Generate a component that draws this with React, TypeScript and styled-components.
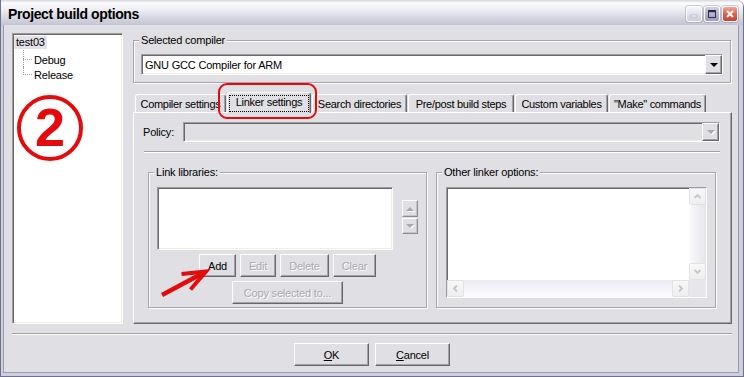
import React from "react";
import styled, { createGlobalStyle, css } from "styled-components";

const FACE = "#e0dfe3";
const RED = "#e30b0b";

const GlobalStyle = createGlobalStyle`
  html, body {
    margin: 0;
    padding: 0;
    background: #ffffff;
  }
  #root {
    width: 744px;
    height: 377px;
  }
`;

// classic 3D edges
const sunken = css`
  border: 1px solid;
  border-color: #9d9da1 #ffffff #ffffff #9d9da1;
  box-shadow: inset 1px 1px 0 #696969, inset -1px -1px 0 #f1efe2;
`;

const raised = css`
  border: 1px solid;
  border-color: #ffffff #68686c #68686c #ffffff;
  box-shadow: inset -1px -1px 0 #a2a2a7;
`;

const Window = styled.div`
  width: 744px;
  height: 377px;
  display: flex;
  flex-direction: column;
  box-sizing: border-box;
  border: 1px solid #70708c;
  border-top: none;
  border-top-right-radius: 7px;
  overflow: hidden;
  background: ${FACE};
  font-family: "Liberation Sans", Arial, sans-serif;
  font-size: 11px;
  letter-spacing: -0.2px;
  color: #000;

  * {
    box-sizing: border-box;
  }
`;

const TitleBar = styled.div`
  height: 25px;
  flex: none;
  display: flex;
  align-items: center;
  padding: 3px 5px 0 7px;
  background: linear-gradient(
    #d6d6e2 0px,
    #fcfcfe 3px,
    #efeff4 9px,
    #dcdce6 16px,
    #c4c4d3 25px
  );
`;

const TitleText = styled.span`
  flex: 1;
  font-weight: bold;
  font-size: 14px;
  letter-spacing: -0.4px;
`;

const CaptionButtons = styled.div`
  display: flex;
  gap: 2px;
`;

const CapButton = styled.div<{ $kind: "min" | "max" | "close" }>`
  width: 16px;
  height: 16px;
  border: 1px solid #ffffff;
  border-radius: 3px;
  display: flex;
  align-items: center;
  justify-content: center;
  box-shadow: 0 0 0 1px rgba(120, 120, 150, 0.35);
  background: ${(p) =>
    p.$kind === "close"
      ? "linear-gradient(#f2a595, #dc5d4a 55%, #c8402f)"
      : p.$kind === "max"
      ? "linear-gradient(#d0d0e0, #9c9cbc)"
      : "linear-gradient(#f6f6f9, #cdcdda)"};
`;

const Frame = styled.div`
  flex: 1;
  display: flex;
  flex-direction: column;
  min-height: 0;
  border-style: solid;
  border-color: #cfcfdc;
  border-width: 0 4px 3px 2px;
  box-shadow: inset 1px 0 0 #9b9bb3, inset -1px 0 0 #9b9bb3,
    inset 0 -1px 0 #9b9bb3;
  padding: 8px 7px 7px 9px;
`;

const Main = styled.div`
  flex: 1;
  display: flex;
  gap: 10px;
  min-height: 0;
`;

const Tree = styled.div`
  width: 111px;
  position: relative;
  background: #ffffff;
  ${sunken};
  padding: 1px;
`;

const TreeRoot = styled.div`
  height: 17px;
  display: flex;
  align-items: flex-start;
  padding-top: 1px;
`;

const RootLabel = styled.span`
  background: #e3e2e8;
  padding: 0 2px 1px 2px;
`;

const TreeChild = styled.div<{ $last?: boolean }>`
  height: 15px;
  display: flex;
  align-items: center;
  padding-left: 20px;
  position: relative;

  &::before {
    content: "";
    position: absolute;
    left: 9px;
    top: 7px;
    width: 9px;
    border-top: 1px dotted #a0a0a0;
  }

  &::after {
    content: "";
    position: absolute;
    left: 9px;
    top: ${(p) => (p.$last ? 0 : -2)}px;
    height: ${(p) => (p.$last ? 8 : 17)}px;
    border-left: 1px dotted #a0a0a0;
  }
`;

const CircledNumber = styled.div`
  position: absolute;
  left: 4px;
  top: 61px;
  width: 66px;
  height: 66px;
  border: 4px solid ${RED};
  border-radius: 50%;
  display: flex;
  align-items: center;
  justify-content: center;
  padding-bottom: 3px;
  color: ${RED};
  font-family: "Liberation Sans", Arial, sans-serif;
  font-weight: bold;
  font-size: 54px;
  line-height: 1;
  letter-spacing: 0;
`;

const RightCol = styled.div`
  flex: 1;
  min-width: 0;
  display: flex;
  flex-direction: column;
  position: relative;
`;

const GroupBox = styled.fieldset<{ $pad: string }>`
  margin: 0;
  min-width: 0;
  padding: ${(p) => p.$pad};
  border: 1px solid #a5a4aa;
  box-shadow: inset 1px 1px 0 #ffffff, 1px 1px 0 #ffffff;
`;

// legend sits in the fieldset's content box, so its offset is given against the padding
const Legend = styled.legend<{ $ml: number }>`
  font: inherit;
  line-height: 13px;
  padding: 0 2px;
  margin-left: ${(p) => p.$ml}px;
  background: ${FACE};
`;

const Combo = styled.div<{ $h: number; $disabled?: boolean }>`
  height: ${(p) => p.$h}px;
  display: flex;
  background: ${(p) => (p.$disabled ? FACE : "#ffffff")};
  ${sunken};
`;

const ComboText = styled.div`
  flex: 1;
  display: flex;
  align-items: center;
  padding-left: 3px;
`;

const DropButton = styled.div`
  width: 17px;
  display: flex;
  align-items: center;
  justify-content: center;
  background: ${FACE};
  ${raised};
`;

const Triangle = styled.span<{ $up?: boolean; $disabled?: boolean }>`
  width: 0;
  height: 0;
  border-left: 4px solid transparent;
  border-right: 4px solid transparent;
  ${(p) =>
    p.$up
      ? `border-bottom: 4px solid ${p.$disabled ? "#a9a8ad" : "#000"};`
      : `border-top: 4px solid ${p.$disabled ? "#a9a8ad" : "#000"};`}
  ${(p) => p.$disabled && "filter: drop-shadow(1px 1px 0 #ffffff);"}
`;

const TabStrip = styled.div`
  height: 20px;
  margin-top: 9px;
  padding-left: 2px;
  display: flex;
  align-items: flex-end;
  gap: 1px;
  position: relative;
  z-index: 1;
`;

const Tab = styled.div<{ $w: number; $active?: boolean }>`
  width: ${(p) => p.$w}px;
  height: ${(p) => (p.$active ? 21 : 18)}px;
  margin-bottom: ${(p) => (p.$active ? -1 : 0)}px;
  padding: ${(p) => (p.$active ? "2px 1px 1px 1px" : "3px 0 0 0")};
  display: flex;
  justify-content: center;
  align-items: ${(p) => (p.$active ? "stretch" : "flex-start")};
  line-height: 13px;
  white-space: nowrap;
  letter-spacing: -0.3px;
  background: ${FACE};
  border: 1px solid;
  border-bottom: none;
  border-color: #ffffff #68686c #68686c #ffffff;
  border-radius: 3px 3px 0 0;
  box-shadow: inset -1px 0 0 #a2a2a7;
`;

const FocusBox = styled.div`
  flex: 1;
  border: 1px dotted #000;
  text-align: center;
`;

const TabMark = styled.div`
  position: absolute;
  left: 85px;
  top: 50px;
  width: 99px;
  height: 36px;
  border: 2px solid ${RED};
  border-radius: 9px;
  z-index: 2;
`;

const Panel = styled.div`
  flex: 1;
  display: flex;
  flex-direction: column;
  position: relative;
  background: ${FACE};
  border: 1px solid;
  border-color: #ffffff #68686c #68686c #ffffff;
  box-shadow: inset -1px -1px 0 #a2a2a7;
  padding: 9px 11px 0 9px;
`;

const PolicyRow = styled.div`
  display: flex;
  align-items: center;
`;

const FieldLabel = styled.span`
  width: 40px;
`;

const Etched = styled.div<{ $m: string }>`
  height: 2px;
  margin: ${(p) => p.$m};
  border-top: 1px solid #a0a0a6;
  border-bottom: 1px solid #ffffff;
`;

const GroupsRow = styled.div`
  display: flex;
  gap: 9px;
  margin-top: 13px;
  padding: 0 4px 0 5px;

  & > fieldset {
    flex: 1;
  }
`;

const GroupBody = styled.div`
  display: flex;
  flex-direction: column;
`;

const ListRow = styled.div`
  display: flex;
  align-items: center;
  gap: 9px;
`;

const ListBox = styled.div`
  flex: 1;
  height: 63px;
  background: #ffffff;
  ${sunken};
`;

const Spinner = styled.div`
  width: 16px;
  display: flex;
  flex-direction: column;
  gap: 1px;
  margin-top: -3px;
`;

const SpinButton = styled.div<{ $h: number }>`
  height: ${(p) => p.$h}px;
  display: flex;
  align-items: center;
  justify-content: center;
  background: ${FACE};
  border: 1px solid;
  border-color: #ffffff #8c8c92 #8c8c92 #ffffff;
  box-shadow: inset -1px -1px 0 #c4c4c9;
`;

const ButtonRow = styled.div`
  display: flex;
  justify-content: center;
  gap: 4px;
  margin-top: 4px;
`;

const Button = styled.button<{ $w: number }>`
  width: ${(p) => p.$w}px;
  height: 23px;
  margin: 0;
  padding: 0;
  font: inherit;
  letter-spacing: inherit;
  color: #000;
  background: ${FACE};
  ${raised};

  &:disabled {
    color: #a9a8ad;
    text-shadow: 1px 1px 0 #ffffff;
  }
`;

const TextArea = styled.div`
  height: 111px;
  background: #ffffff;
  ${sunken};
  display: grid;
  grid-template-columns: 1fr 17px;
  grid-template-rows: 1fr 17px;
`;

const VScroll = styled.div`
  display: flex;
  flex-direction: column;
  justify-content: space-between;
  background: linear-gradient(90deg, #fbfbfc, #ececf2 60%, #e6e6ef);
`;

const HScroll = styled.div`
  display: flex;
  justify-content: space-between;
  background: linear-gradient(#ebebf2, #f4f4f8 50%, #fdfdfe);
`;

const ScrollCorner = styled.div`
  background: #e7e6ea;
`;

const ScrollButton = styled.div`
  width: 17px;
  height: 17px;
  display: flex;
  align-items: center;
  justify-content: center;
  background: linear-gradient(#f8f8f8, #eeeeef);
  border: 1px solid #e2e2e6;
  border-radius: 2px;
`;

const ArrowMark = styled.svg`
  position: absolute;
  left: 24px;
  top: 155px;
  z-index: 2;
`;

const BottomRow = styled.div`
  display: flex;
  justify-content: center;
  gap: 6px;
  margin-top: 8px;
`;

const Chevron = ({ dir }: { dir: "up" | "down" | "left" | "right" }) => {
  const pts = {
    up: "1.5,6 4.5,3 7.5,6",
    down: "1.5,3 4.5,6 7.5,3",
    left: "6,1.5 3,4.5 6,7.5",
    right: "3,1.5 6,4.5 3,7.5",
  }[dir];
  return (
    <svg width="9" height="9" viewBox="0 0 9 9">
      <polyline points={pts} fill="none" stroke="#c6c6cc" strokeWidth="1.8" />
    </svg>
  );
};

const TABS = [
  { label: "Compiler settings", w: 91 },
  { label: "Linker settings", w: 84, active: true },
  { label: "Search directories", w: 95 },
  { label: "Pre/post build steps", w: 106 },
  { label: "Custom variables", w: 93 },
  { label: "\"Make\" commands", w: 97 },
];

export default function App() {
  return (
    <>
      <GlobalStyle />
      <Window>
        <TitleBar>
          <TitleText>Project build options</TitleText>
          <CaptionButtons>
            <CapButton $kind="min">
              <svg width="10" height="10" viewBox="0 0 10 10">
                <rect x="2" y="6" width="6" height="2" fill="#f6f6fa" stroke="#9a9ab0" strokeWidth="0.5" />
              </svg>
            </CapButton>
            <CapButton $kind="max">
              <svg width="10" height="10" viewBox="0 0 10 10">
                <rect x="1.5" y="1.5" width="7" height="7" fill="none" stroke="#2a2a4a" strokeWidth="1" />
                <line x1="1.5" y1="2.5" x2="8.5" y2="2.5" stroke="#2a2a4a" strokeWidth="1.5" />
              </svg>
            </CapButton>
            <CapButton $kind="close">
              <svg width="10" height="10" viewBox="0 0 10 10">
                <path d="M2 2 L8 8 M8 2 L2 8" stroke="#ffffff" strokeWidth="2" />
              </svg>
            </CapButton>
          </CaptionButtons>
        </TitleBar>

        <Frame>
          <Main>
            <Tree>
              <TreeRoot>
                <RootLabel>test03</RootLabel>
              </TreeRoot>
              <TreeChild>Debug</TreeChild>
              <TreeChild $last>Release</TreeChild>
              <CircledNumber>2</CircledNumber>
            </Tree>

            <RightCol>
              <GroupBox $pad="7px 7px 7px 7px" style={{ marginTop: 1, marginRight: 1 }}>
                <Legend $ml={-2}>Selected compiler</Legend>
                <Combo $h={21}>
                  <ComboText>GNU GCC Compiler for ARM</ComboText>
                  <DropButton>
                    <Triangle />
                  </DropButton>
                </Combo>
              </GroupBox>

              <TabStrip>
                {TABS.map((t) => (
                  <Tab key={t.label} $w={t.w} $active={t.active}>
                    {t.active ? <FocusBox>{t.label}</FocusBox> : t.label}
                  </Tab>
                ))}
              </TabStrip>
              <TabMark />

              <Panel>
                <PolicyRow>
                  <FieldLabel>Policy:</FieldLabel>
                  <Combo $h={20} $disabled style={{ flex: 1 }}>
                    <ComboText />
                    <DropButton>
                      <Triangle $disabled />
                    </DropButton>
                  </Combo>
                </PolicyRow>
                <Etched $m="9px 0 0 1px" />

                <GroupsRow>
                  <GroupBox $pad="8px 8px 3px 8px">
                    <Legend $ml={-3}>Link libraries:</Legend>
                    <GroupBody>
                      <ListRow>
                        <ListBox />
                        <Spinner>
                          <SpinButton $h={17}>
                            <Triangle $up $disabled />
                          </SpinButton>
                          <SpinButton $h={16}>
                            <Triangle $disabled />
                          </SpinButton>
                        </Spinner>
                      </ListRow>
                      <ButtonRow>
                        <Button $w={37}>Add</Button>
                        <Button $w={36} disabled>Edit</Button>
                        <Button $w={49} disabled>Delete</Button>
                        <Button $w={43} disabled>Clear</Button>
                      </ButtonRow>
                      <ButtonRow>
                        <Button $w={111} disabled>Copy selected to...</Button>
                      </ButtonRow>
                    </GroupBody>
                  </GroupBox>

                  <GroupBox $pad="8px 8px 8px 9px">
                    <Legend $ml={-4}>Other linker options:</Legend>
                    <TextArea>
                      <div />
                      <VScroll>
                        <ScrollButton>
                          <Chevron dir="up" />
                        </ScrollButton>
                        <ScrollButton>
                          <Chevron dir="down" />
                        </ScrollButton>
                      </VScroll>
                      <HScroll>
                        <ScrollButton>
                          <Chevron dir="left" />
                        </ScrollButton>
                        <ScrollButton>
                          <Chevron dir="right" />
                        </ScrollButton>
                      </HScroll>
                      <ScrollCorner />
                    </TextArea>
                  </GroupBox>
                </GroupsRow>

                <ArrowMark width="54" height="32" viewBox="0 0 54 32">
                  <line x1="4" y1="27" x2="46" y2="4.5" stroke={RED} strokeWidth="4.5" />
                  <polyline
                    points="23.5,6 48,3.5 32.5,21.5"
                    fill="none"
                    stroke={RED}
                    strokeWidth="4"
                  />
                </ArrowMark>
              </Panel>
            </RightCol>
          </Main>

          <Etched $m="9px 0 0 0" />
          <BottomRow>
            <Button $w={75}>
              <u>O</u>K
            </Button>
            <Button $w={75}>
              <u>C</u>ancel
            </Button>
          </BottomRow>
        </Frame>
      </Window>
    </>
  );
}
